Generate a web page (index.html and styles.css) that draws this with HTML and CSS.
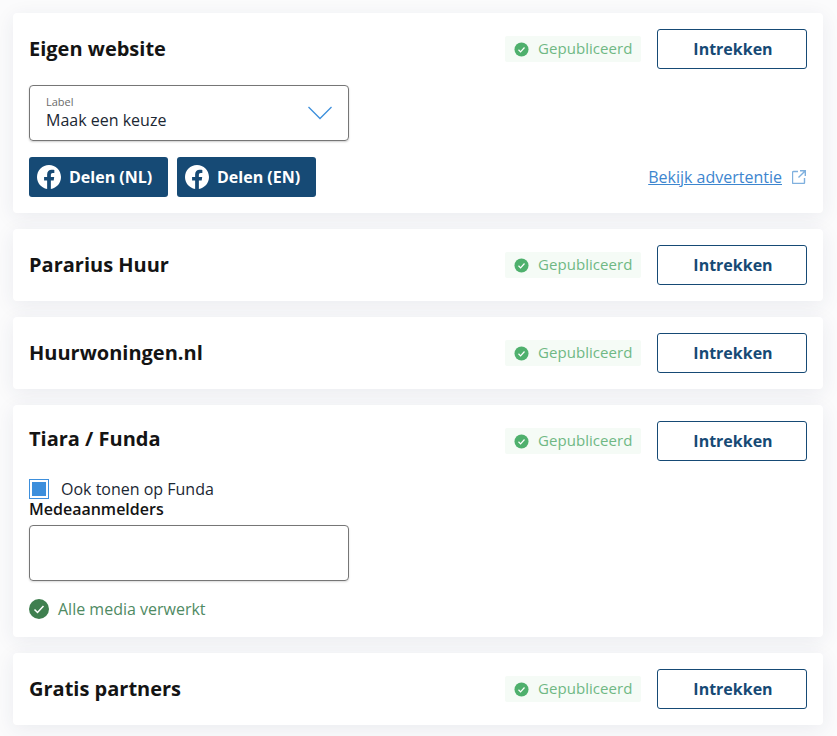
FILE: index.html
```html
<!DOCTYPE html>
<html lang="nl">
<head>
<meta charset="utf-8">
<title>Publicaties</title>
<link rel="stylesheet" href="styles.css">
</head>
<body>
<main class="list">
  <section class="card">
    <div class="head">
      <h2 class="title">Eigen website</h2>
      <div class="actions">
        <span class="chip"><svg class="chip-icon" viewBox="0 0 16 16"><circle cx="8" cy="8" r="7.5" fill="#4fb06d"/><path d="M4.8 8.3l2.2 2.2 4.2-4.600" fill="none" stroke="#fff" stroke-width="1.3"/></svg><span class="chip-text">Gepubliceerd</span></span>
        <button class="outline">Intrekken</button>
      </div>
    </div>
    <div class="select">
      <div class="select-text"><span class="select-label">Label</span><span class="select-value">Maak een keuze</span></div>
      <svg class="chevron" viewBox="0 0 24 14"><path d="M0.5 1l11.5 11.5L23.500 1" fill="none" stroke="#3d8fdc" stroke-width="1.3"/></svg>
    </div>
    <div class="share-row">
      <button class="share"><svg class="fb" viewBox="0 0 24 24"><path fill="#fff" d="M24 12.07C24 5.4 18.630 0 12 0S0 5.400 0 12.070c0 6.030 4.390 11.020 10.130 11.930v-8.440H7.080v-3.490h3.050V9.410c0-3.020 1.790-4.690 4.530-4.690 1.310 0 2.680.24 2.680.24v2.970h-1.510c-1.490 0-1.960.93-1.960 1.880v2.260h3.330l-.53 3.490h-2.800V24C19.610 23.090 24 18.100 24 12.070z"/></svg>Delen (NL)</button>
      <button class="share"><svg class="fb" viewBox="0 0 24 24"><path fill="#fff" d="M24 12.07C24 5.4 18.630 0 12 0S0 5.400 0 12.070c0 6.030 4.390 11.020 10.130 11.930v-8.440H7.080v-3.490h3.050V9.410c0-3.020 1.790-4.690 4.530-4.690 1.310 0 2.680.24 2.680.24v2.970h-1.510c-1.490 0-1.960.93-1.960 1.880v2.260h3.330l-.53 3.490h-2.800V24C19.610 23.090 24 18.100 24 12.070z"/></svg>Delen (EN)</button>
      <a class="ad-link" href="#"><span class="ad-text">Bekijk advertentie</span><svg class="ext" viewBox="0 0 14 14"><path d="M6 1.500H1.500a1 1 0 0 0-1 1V12.500a1 1 0 0 0 1 1H11.500a1 1 0 0 0 1-1V8M8 .7h5.300V6M13.300.7L6.500 7.500" fill="none" stroke="#7fb0de" stroke-width="1.400"/></svg></a>
    </div>
  </section>

  <section class="card">
    <div class="head">
      <h2 class="title">Pararius Huur</h2>
      <div class="actions">
        <span class="chip"><svg class="chip-icon" viewBox="0 0 16 16"><circle cx="8" cy="8" r="7.5" fill="#4fb06d"/><path d="M4.8 8.3l2.2 2.2 4.2-4.600" fill="none" stroke="#fff" stroke-width="1.3"/></svg><span class="chip-text">Gepubliceerd</span></span>
        <button class="outline">Intrekken</button>
      </div>
    </div>
  </section>

  <section class="card">
    <div class="head">
      <h2 class="title">Huurwoningen.nl</h2>
      <div class="actions">
        <span class="chip"><svg class="chip-icon" viewBox="0 0 16 16"><circle cx="8" cy="8" r="7.5" fill="#4fb06d"/><path d="M4.8 8.3l2.2 2.2 4.2-4.600" fill="none" stroke="#fff" stroke-width="1.3"/></svg><span class="chip-text">Gepubliceerd</span></span>
        <button class="outline">Intrekken</button>
      </div>
    </div>
  </section>

  <section class="card card-tall">
    <div class="head head-top">
      <h2 class="title">Tiara / Funda</h2>
      <div class="actions">
        <span class="chip"><svg class="chip-icon" viewBox="0 0 16 16"><circle cx="8" cy="8" r="7.5" fill="#4fb06d"/><path d="M4.8 8.3l2.2 2.2 4.2-4.600" fill="none" stroke="#fff" stroke-width="1.3"/></svg><span class="chip-text">Gepubliceerd</span></span>
        <button class="outline">Intrekken</button>
      </div>
    </div>
    <label class="check"><span class="check-box"><span class="check-fill"></span></span>Ook tonen op Funda</label>
    <div class="field-label">Medeaanmelders</div>
    <div class="input"></div>
    <div class="status"><svg class="status-icon" viewBox="0 0 20 20"><circle cx="10" cy="10" r="10" fill="#3f7f4f"/><path d="M5.500 10.500l3 3 6-6.500" fill="none" stroke="#fff" stroke-width="1.500"/></svg>Alle media verwerkt</div>
  </section>

  <section class="card">
    <div class="head">
      <h2 class="title">Gratis partners</h2>
      <div class="actions">
        <span class="chip"><svg class="chip-icon" viewBox="0 0 16 16"><circle cx="8" cy="8" r="7.5" fill="#4fb06d"/><path d="M4.8 8.3l2.2 2.2 4.2-4.600" fill="none" stroke="#fff" stroke-width="1.3"/></svg><span class="chip-text">Gepubliceerd</span></span>
        <button class="outline">Intrekken</button>
      </div>
    </div>
  </section>
</main>
</body>
</html>
```
FILE: styles.css
```css
* { box-sizing: border-box; }
html, body { margin: 0; height: 100%; overflow: hidden; }
body {
  background: #fbfbfc;
  font-family: "Open Sans", sans-serif;
  font-size: 16px;
  color: #111;
}
.list {
  display: flex;
  flex-direction: column;
  gap: 16px;
  padding: 13px 14px 0 13px;
}
.card {
  background: #fff;
  border-radius: 4px;
  padding: 16px;
  box-shadow: 0 4px 20px rgba(40, 50, 90, 0.08);
}
.card-tall { padding-bottom: 18px; }
.head {
  display: flex;
  align-items: center;
  justify-content: space-between;
  height: 40px;
}
.head-top { align-items: flex-start; }
.head-top .title { line-height: 36px; padding-bottom: 0; }
.title {
  margin: 0;
  padding-bottom: 2px;
  font-size: 20px;
  font-weight: 700;
  color: #141414;
}
.actions {
  display: flex;
  align-items: center;
  gap: 16px;
}
.chip {
  display: flex;
  align-items: center;
  gap: 9px;
  width: 136px;
  height: 26px;
  padding-left: 9px;
  border-radius: 2px;
  background: #f5fbf6;
  color: #6fb884;
  font-size: 15px;
}
.chip-text { padding-bottom: 2px; letter-spacing: 0.05px; }
.chip-icon { width: 15px; height: 15px; flex: none; }
button {
  font-family: inherit;
  cursor: pointer;
}
.outline {
  width: 150px;
  height: 40px;
  padding: 0 0 0 2px;
  border: 1px solid #164a75;
  border-radius: 3px;
  background: #fff;
  color: #164a75;
  font-size: 16px;
  font-weight: 700;
}
.select {
  display: flex;
  align-items: center;
  justify-content: space-between;
  width: 320px;
  height: 56px;
  margin-top: 16px;
  padding: 0 16px 0 16px;
  border: 1px solid #767676;
  border-radius: 4px;
  box-shadow: 0 1px 2px rgba(0, 0, 0, 0.2);
}
.select-text { display: flex; flex-direction: column; }
.select-label { font-size: 11px; line-height: 14px; color: #6b6b6b; }
.select-value { font-size: 16px; line-height: 22px; color: #1b2733; }
.chevron { width: 24px; height: 14px; }
.share-row {
  display: flex;
  align-items: center;
  gap: 9px;
  margin-top: 16px;
}
.share {
  display: flex;
  align-items: center;
  gap: 8px;
  width: 139px;
  height: 40px;
  padding: 0 0 0 8px;
  border: 0;
  border-radius: 3px;
  background: #164a75;
  color: #fff;
  font-size: 16px;
  font-weight: 700;
}
.fb { width: 24px; height: 24px; flex: none; }
.ad-link {
  display: flex;
  align-items: center;
  gap: 10px;
  margin-left: auto;
  margin-right: 1px;
  color: #3d86cf;
  text-decoration: none;
}
.ad-text { text-decoration: underline; }
.ext { width: 14px; height: 14px; }
.check {
  display: flex;
  align-items: center;
  gap: 12px;
  height: 20px;
  margin-top: 18px;
  color: #1b2733;
}
.check-box {
  display: flex;
  align-items: center;
  justify-content: center;
  width: 20px;
  height: 20px;
  border: 1px solid #3d8fdc;
}
.check-fill { width: 14px; height: 14px; background: #3d8fdc; }
.field-label { font-size: 16px; font-weight: 600; line-height: 20px; color: #141414; }
.input {
  width: 320px;
  height: 56px;
  margin-top: 6px;
  border: 1px solid #767676;
  border-radius: 4px;
  box-shadow: 0 1px 2px rgba(0, 0, 0, 0.15);
}
.status {
  display: flex;
  align-items: center;
  gap: 9px;
  height: 20px;
  margin-top: 18px;
  color: #4f8a63;
}
.status-icon { width: 20px; height: 20px; flex: none; }
```
